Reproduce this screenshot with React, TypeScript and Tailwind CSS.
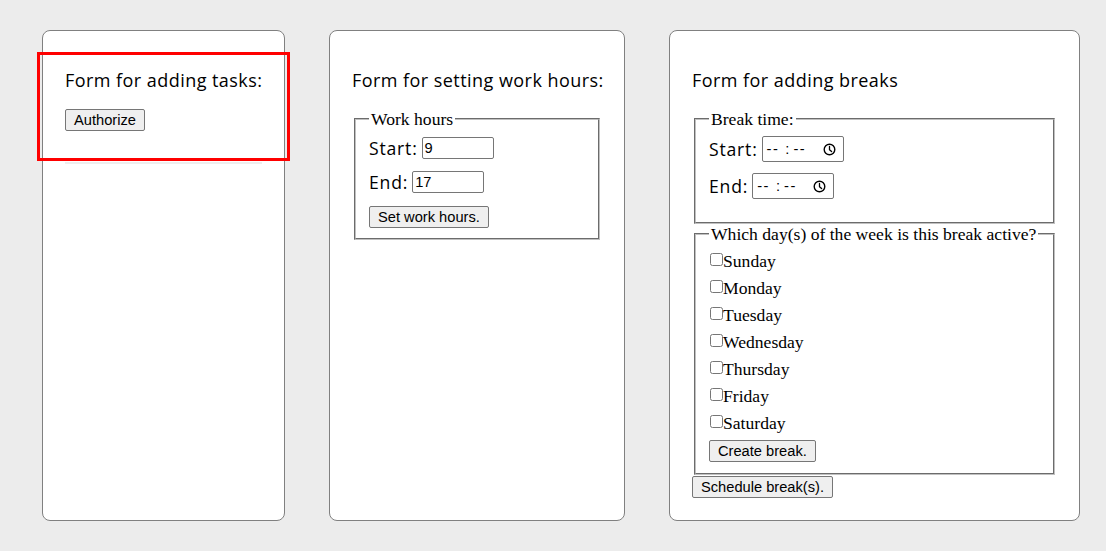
import React from "react";

const heading =
  "font-['Open_Sans',sans-serif] text-[18px] leading-[22px] font-normal text-black tracking-[0.45px] whitespace-nowrap";
const label = "font-['Open_Sans',sans-serif] text-[17.6px] leading-[22px] text-black tracking-[0.8px] whitespace-nowrap";
const serif = "font-['Liberation_Serif','Times_New_Roman',serif] text-[17.6px] leading-[20px] text-black whitespace-nowrap";
const fieldsetCls =
  "mx-[2px] border-2 [border-style:groove] border-[#c0c0c0] px-[13px] min-w-0";

function Btn({ children }: { children: React.ReactNode }) {
  return (
    <button className="h-[22px] px-[8px] bg-[#efefef] border border-[#767676] rounded-[2px] text-[14.67px] leading-[18px] font-['Liberation_Sans',Arial,sans-serif] text-black whitespace-nowrap">
      {children}
    </button>
  );
}

function TextBox({ value }: { value: string }) {
  return (
    <div className="w-[72px] h-[22px] border border-[#767676] rounded-[2px] px-[2px] flex items-center font-['Liberation_Sans',Arial,sans-serif] text-[14.67px] text-black">
      {value}
    </div>
  );
}

function Clock() {
  return (
    <svg width="13" height="13" viewBox="0 0 13 13" className="ml-auto">
      <circle cx="6.5" cy="6.5" r="5.3" fill="none" stroke="#000" strokeWidth="1.4" />
      <path d="M6.5 3.4 V6.8 L8.6 8.6" fill="none" stroke="#000" strokeWidth="1.3" strokeLinecap="round" strokeLinejoin="round" />
    </svg>
  );
}

function TimeBox() {
  return (
    <div className="w-[82px] h-[26px] border border-[#767676] rounded-[2px] flex items-center pl-[4px] pr-[7px] font-['Liberation_Sans',Arial,sans-serif] text-[14.67px] text-black">
      <span className="tracking-[1.5px]">--</span>
      <span className="ml-[6px]">:</span>
      <span className="ml-[4px] tracking-[1.5px]">--</span>
      <Clock />
    </div>
  );
}

const days = ["Sunday", "Monday", "Tuesday", "Wednesday", "Thursday", "Friday", "Saturday"];

export default function App() {
  return (
    <div className="min-h-[551px] w-full bg-[#ececec] flex items-start gap-[44px] pl-[42px] pt-[30px]">
      {/* Card 1 */}
      <div className="relative w-[243px] h-[491px] shrink-0 bg-white border border-[#808080] rounded-[8px] px-[22px] pt-[38px]">
        <h3 className={heading}>Form for adding tasks:</h3>
        <div className="mt-[18px] flex">
          <Btn>Authorize</Btn>
        </div>
        <div className="mt-[31px] h-[2px] bg-[#eeeeee]"></div>
        <div className="absolute -left-[6px] top-[21px] w-[253px] h-[109px] border-[3px] border-[#ff0000]"></div>
      </div>

      {/* Card 2 */}
      <div className="w-[296px] h-[491px] shrink-0 bg-white border border-[#808080] rounded-[8px] px-[22px] pt-[38px]">
        <h3 className={heading}>Form for setting work hours:</h3>
        <fieldset className={`${fieldsetCls} mt-[18px] pt-[6px] pb-[10px]`}>
          <legend className={`${serif} px-[2px]`}>Work hours</legend>
          <div className="h-[26px] flex items-center">
            <span className={`${label} mr-[4px]`}>Start:</span>
            <TextBox value="9" />
          </div>
          <div className="h-[26px] mt-[8px] flex items-center">
            <span className={`${label} mr-[4px]`}>End:</span>
            <TextBox value="17" />
          </div>
          <div className="mt-[11px] flex">
            <Btn>Set work hours.</Btn>
          </div>
        </fieldset>
      </div>

      {/* Card 3 */}
      <div className="w-[411px] h-[491px] shrink-0 bg-white border border-[#808080] rounded-[8px] px-[22px] pt-[38px]">
        <h3 className={heading}>Form for adding breaks</h3>
        <fieldset className={`${fieldsetCls} mt-[18px] pt-[6px] pb-[22px]`}>
          <legend className={`${serif} px-[2px]`}>Break time:</legend>
          <div className="h-[28px] flex items-center">
            <span className={`${label} mr-[4px]`}>Start:</span>
            <TimeBox />
          </div>
          <div className="h-[28px] mt-[9px] flex items-center">
            <span className={`${label} mr-[4px]`}>End:</span>
            <TimeBox />
          </div>
        </fieldset>
        <fieldset className={`${fieldsetCls} pt-[2px] pb-[11px]`}>
          <legend className={`${serif} px-[2px]`}>Which day(s) of the week is this break active?</legend>
          {days.map((d) => (
            <div key={d} className="h-[27px] flex items-center">
              <input type="checkbox" className="w-[13px] h-[13px] ml-[1px]" />
              <span className={`${serif} mt-[2px]`}>{d}</span>
            </div>
          ))}
          <div className="mt-[5px] flex">
            <Btn>Create break.</Btn>
          </div>
        </fieldset>
        <div className="mt-[1px] flex">
          <Btn>Schedule break(s).</Btn>
        </div>
      </div>
    </div>
  );
}
